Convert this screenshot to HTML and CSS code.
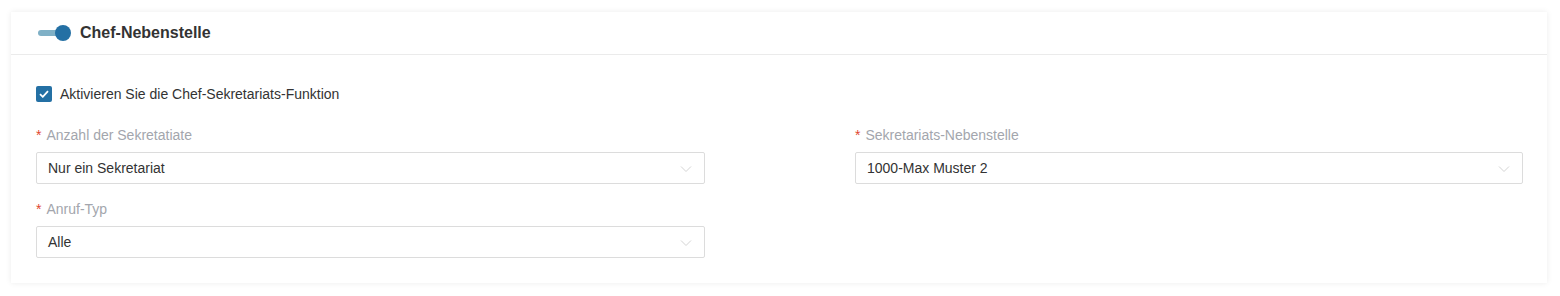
FILE: index.html
```html
<!DOCTYPE html>
<html lang="de">
<head>
<meta charset="utf-8">
<link rel="stylesheet" href="styles.css">
</head>
<body>
<div class="card">
  <div class="card-header">
    <span class="switch"><span class="switch-track"></span><span class="switch-knob"></span></span>
    <span class="card-title">Chef-Nebenstelle</span>
  </div>
  <div class="card-body">
    <label class="check">
      <span class="check-box"><svg width="10" height="8" viewBox="0 0 10 8"><path d="M1 4.2 L3.8 6.8 L9 1.2" fill="none" stroke="#fff" stroke-width="1.8"/></svg></span>
      <span class="check-label">Aktivieren Sie die Chef-Sekretariats-Funktion</span>
    </label>
    <div class="grid">
      <div class="field">
        <div class="field-label"><span class="req">*</span>Anzahl der Sekretatiate</div>
        <div class="select"><span>Nur ein Sekretariat</span><svg class="chev" width="12" height="8" viewBox="0 0 12 8"><path d="M1 1.5 L6 6.5 L11 1.5" fill="none" stroke="#d4d4d4" stroke-width="1"/></svg></div>
      </div>
      <div class="field">
        <div class="field-label"><span class="req">*</span>Sekretariats-Nebenstelle</div>
        <div class="select"><span>1000-Max Muster 2</span><svg class="chev" width="12" height="8" viewBox="0 0 12 8"><path d="M1 1.5 L6 6.5 L11 1.5" fill="none" stroke="#d4d4d4" stroke-width="1"/></svg></div>
      </div>
      <div class="field">
        <div class="field-label"><span class="req">*</span>Anruf-Typ</div>
        <div class="select"><span>Alle</span><svg class="chev" width="12" height="8" viewBox="0 0 12 8"><path d="M1 1.5 L6 6.5 L11 1.5" fill="none" stroke="#d4d4d4" stroke-width="1"/></svg></div>
      </div>
    </div>
  </div>
</div>
</body>
</html>
```
FILE: styles.css
```css
html, body {
  margin: 0;
  padding: 0;
  background: #ffffff;
  font-family: "Liberation Sans", Arial, sans-serif;
  color: #333;
}
body {
  padding: 12px 13px 13px 11px;
}
.card {
  background: #fff;
  box-shadow: 0 0 6px rgba(0,0,0,0.08);
  height: 271px;
  box-sizing: border-box;
}
.card-header {
  height: 43px;
  border-bottom: 1px solid #ebebeb;
  display: flex;
  align-items: center;
  padding-left: 27px;
  box-sizing: border-box;
}
.switch {
  position: relative;
  width: 33px;
  height: 18px;
  display: inline-block;
  margin-right: 9px;
}
.switch-track {
  position: absolute;
  left: 0;
  top: 6px;
  width: 28px;
  height: 6px;
  border-radius: 3px;
  background: #7fb0c6;
}
.switch-knob {
  position: absolute;
  right: 0;
  top: 1px;
  width: 16px;
  height: 16px;
  border-radius: 50%;
  background: #2470a4;
}
.card-title {
  font-size: 16px;
  font-weight: bold;
  color: #333;
}
.card-body {
  padding: 31px 24px 0 25px;
}
.check {
  display: flex;
  align-items: center;
  height: 16px;
}
.check-box {
  width: 16px;
  height: 16px;
  border-radius: 2px;
  background: #2470a4;
  display: flex;
  align-items: center;
  justify-content: center;
  margin-right: 8px;
}
.check-label {
  font-size: 14px;
  color: #333;
}
.grid {
  display: grid;
  grid-template-columns: 669px 668px;
  justify-content: space-between;
  margin-top: 23px;
  row-gap: 15px;
}
.field-label {
  font-size: 14px;
  color: #a3a6ad;
  height: 20px;
  line-height: 20px;
  margin-bottom: 7px;
}
.req {
  color: #e0472f;
  margin-right: 5px;
}
.select {
  height: 32px;
  box-sizing: border-box;
  border: 1px solid #dcdcdc;
  border-radius: 2px;
  display: flex;
  align-items: center;
  justify-content: space-between;
  padding: 0 12px 0 11px;
  font-size: 14px;
  color: #333;
}
.chev {
  margin-top: 1px;
}
```
